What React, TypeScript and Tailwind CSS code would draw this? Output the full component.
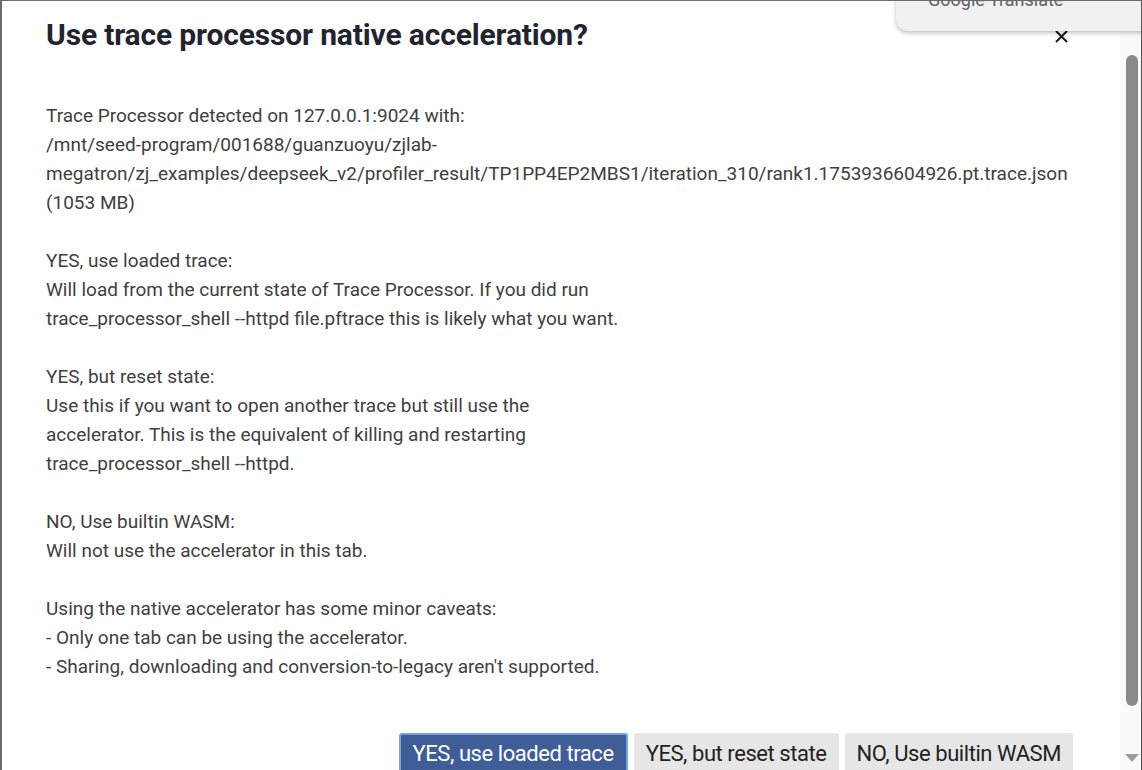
import React from "react";

const lines: string[][] = [
  [
    "Trace Processor detected on 127.0.0.1:9024 with:",
    "/mnt/seed-program/001688/guanzuoyu/zjlab-",
    "megatron/zj_examples/deepseek_v2/profiler_result/TP1PP4EP2MBS1/iteration_310/rank1.1753936604926.pt.trace.json",
    "(1053 MB)",
  ],
  [
    "YES, use loaded trace:",
    "Will load from the current state of Trace Processor. If you did run",
    "trace_processor_shell --httpd file.pftrace this is likely what you want.",
  ],
  [
    "YES, but reset state:",
    "Use this if you want to open another trace but still use the",
    "accelerator. This is the equivalent of killing and restarting",
    "trace_processor_shell --httpd.",
  ],
  ["NO, Use builtin WASM:", "Will not use the accelerator in this tab."],
  [
    "Using the native accelerator has some minor caveats:",
    "- Only one tab can be using the accelerator.",
    "- Sharing, downloading and conversion-to-legacy aren't supported.",
  ],
];

const App = () => {
  return (
    <div
      className="relative w-[1142px] h-[770px] overflow-hidden bg-white flex border-l-2 border-t border-r border-l-[#6b6b6b] border-t-[#6b6b6b] border-r-[#555]"
      style={{ fontFamily: "Roboto, 'Liberation Sans', sans-serif" }}
    >
      <div className="flex-1 flex flex-col pl-[44px] pr-[48px]">
        <div className="flex items-start justify-between pt-[15px]">
          <h1 className="text-[30px] font-bold leading-[38px] text-[#1f2430] tracking-[-0.005em]">
            Use trace processor native acceleration?
          </h1>
          <svg width="13" height="13" viewBox="0 0 13 13" className="mt-[14px] mr-[4px]">
            <path d="M1 1 L12 12 M12 1 L1 12" stroke="#1a1a1a" strokeWidth="2" />
          </svg>
        </div>

        <div className="mt-[47px] text-[19px] leading-[29px] text-[#404040] flex flex-col gap-[29px]">
          {lines.map((para, i) => (
            <div key={i}>
              {para.map((l, j) => (
                <div key={j} className="whitespace-nowrap">
                  {l}
                </div>
              ))}
            </div>
          ))}
        </div>

        <div className="mt-[52px] flex justify-end gap-[6px] mr-[-1px]">
          <button className="h-[40px] px-[12px] bg-[#3f5e98] text-white border-2 border-[#6aa6e8] rounded-[3px] text-[22px] tracking-[-0.02em]">
            YES, use loaded trace
          </button>
          <button className="h-[40px] px-[12px] bg-[#e6e6e6] text-[#222] rounded-[3px] text-[22px] tracking-[-0.02em]">
            YES, but reset state
          </button>
          <button className="h-[40px] px-[12px] bg-[#e6e6e6] text-[#222] rounded-[3px] text-[22px] tracking-[-0.02em]">
            NO, Use builtin WASM
          </button>
        </div>
      </div>

      <div className="w-[21px] bg-[#fafafa] flex flex-col items-center pt-[54px] pb-[8px]">
        <div className="w-[12px] h-[651px] bg-[#8a8a8a] rounded-full ml-[2px]" />
        <div className="flex-1" />
        <svg width="14" height="8" viewBox="0 0 14 8" className="ml-[2px]">
          <path d="M0 0 L14 0 L7 8 Z" fill="#9a9a9a" />
        </svg>
      </div>

      <div className="absolute top-[-20px] left-[894px] w-[260px] h-[50px] bg-[#f1f1f1] rounded-[12px] shadow-[0_2px_4px_rgba(0,0,0,0.25)] pl-[32px] pt-[5px] text-[18px] text-[#5f6368]">
        Google Translate
      </div>
    </div>
  );
};

export default App;
